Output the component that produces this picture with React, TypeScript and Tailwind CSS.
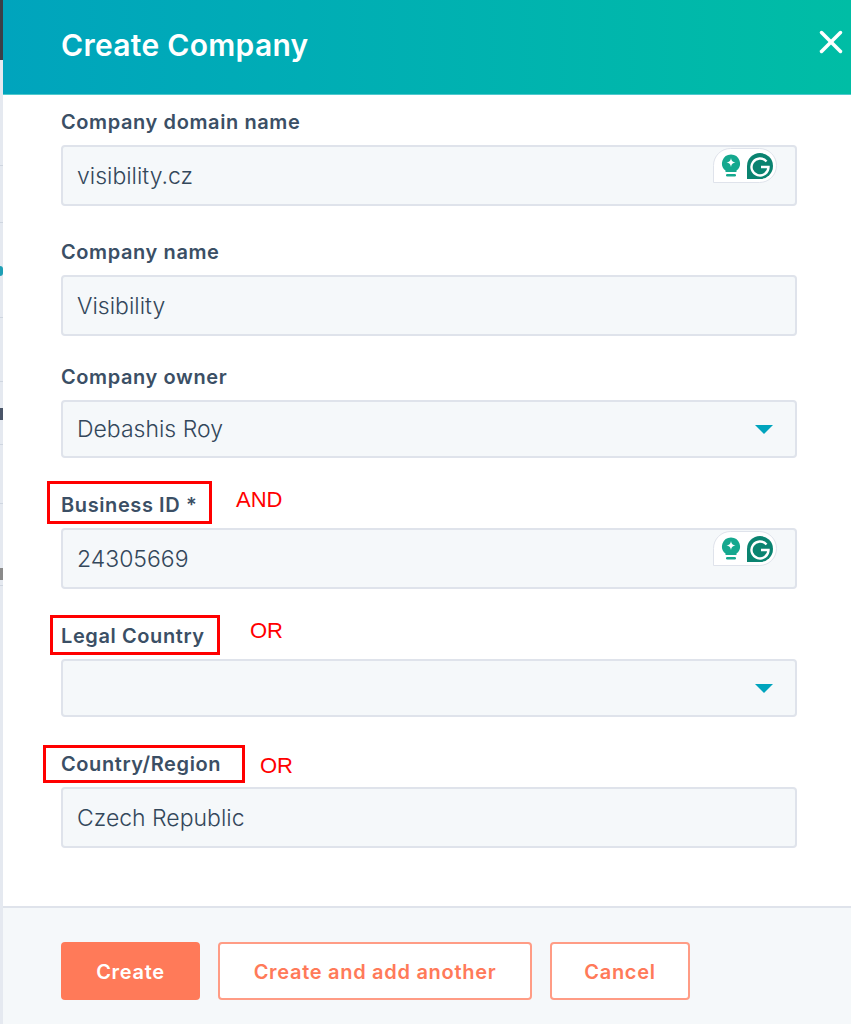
import { X } from "lucide-react";
import { ReactNode } from "react";

// bits of the page behind the dialog that show at the left edge
const stripSegments = [
  "h-[60px] bg-[#3b4048]",
  "h-[105px]",
  "h-px bg-[#cfd6e0]",
  "h-[56px]",
  "h-px bg-[#cfd6e0]",
  "h-[43px]",
  "h-[10px] rounded-r-full bg-[#1f9fb5]",
  "h-[41px]",
  "h-px bg-[#cfd6e0]",
  "h-[63px]",
  "h-px bg-[#cfd6e0]",
  "h-[26px]",
  "h-[12px] bg-[#4a5568]",
  "h-[24px]",
  "h-px bg-[#cfd6e0]",
  "h-[58px]",
  "h-px bg-[#cfd6e0]",
  "h-[64px]",
  "h-[12px] bg-[#8a8a8a]",
  "h-[5px]",
  "h-px bg-[#cfd6e0]",
];

function GrammarlyBadge() {
  return (
    <div className="absolute right-[18px] top-[1px] flex h-[35px] w-[64px] items-center gap-[5px] rounded-tl-[18px] rounded-r-[18px] border border-[#dfe3eb] bg-white pl-[7px]">
      <svg viewBox="0 0 20 24" className="h-[25px] w-[20px]">
        <path d="M10 1a9 9 0 0 0-5.500 16.100V18.500h11v-1.400A9 9 0 0 0 10 1z" fill="#15a88e" />
        <path d="M10 4.500c.6 3 1.500 3.900 4.500 4.500-3 .6-3.900 1.500-4.500 4.500-.6-3-1.500-3.900-4.500-4.500 3-.6 3.900-1.500 4.500-4.500z" fill="#fff" />
        <rect x="5" y="20.500" width="10" height="2.500" rx="1.200" fill="#15a88e" />
      </svg>
      <svg viewBox="0 0 28 28" className="h-[28px] w-[28px]">
        <path d="M14 1a13 13 0 1 1 0 26H1V14A13 13 0 0 1 14 1z" fill="#0a8370" />
        <path d="M20.500 9.500A8.500 8.500 0 1 0 22.500 15H15" fill="none" stroke="#fff" strokeWidth="2.400" />
      </svg>
    </div>
  );
}

function Field({
  label,
  value,
  className,
  select,
  badge,
}: {
  label: string;
  value?: string;
  className: string;
  select?: boolean;
  badge?: boolean;
}) {
  return (
    <div className={className}>
      <div className="h-[23px] text-[20px] font-semibold leading-[25px] tracking-[0.6px] text-[#3b4f65]">
        {label}
      </div>
      <div
        className={`relative mt-[12px] flex items-center rounded-[4px] border-2 border-[#dfe3eb] bg-[#f5f8fa] pl-[14px] pr-[22px] pt-[1px] text-[23px] font-light text-[#33475b] ${
          select ? "h-[58px]" : "h-[61px]"
        }`}
      >
        <span className="flex-1">{value}</span>
        {select && (
          <span className="h-0 w-0 border-x-[9px] border-t-[9px] border-x-transparent border-t-[#00a4bd]" />
        )}
        {badge && <GrammarlyBadge />}
      </div>
    </div>
  );
}

function FooterButton({
  primary,
  width,
  children,
}: {
  primary?: boolean;
  width: string;
  children: ReactNode;
}) {
  return (
    <button
      className={`flex h-[58px] items-center justify-center rounded-[4px] pt-[1px] text-[20px] font-semibold tracking-[0.7px] ${width} ${
        primary
          ? "bg-[#ff7a59] text-white"
          : "border-2 border-[#ff9c85] bg-white text-[#ff7a59]"
      }`}
    >
      {children}
    </button>
  );
}

export default function App() {
  return (
    <div className="relative flex h-[1024px] w-[851px] overflow-hidden bg-white font-['Inter',sans-serif]">
      <div className="flex w-[3px] flex-none flex-col bg-[#e5e9f0]">
        {stripSegments.map((segment, i) => (
          <div key={i} className={segment} />
        ))}
      </div>

      <div className="flex flex-1 flex-col">
        <div className="flex h-[95px] flex-none items-center justify-between border-b border-[#4fc9cd] bg-gradient-to-r from-[#00a4bd] to-[#00bda5] pl-[58px] pr-[1px]">
          <h1 className="mb-[3px] text-[30px] font-semibold tracking-[0.01em] text-white">Create Company</h1>
          <X className="mb-[10px] h-[38px] w-[38px] text-white" strokeWidth={2.200} />
        </div>

        <div className="flex-1 pl-[58px] pr-[54px]">
          <Field className="mt-[15px]" label="Company domain name" value="visibility.cz" badge />
          <Field className="mt-[34px]" label="Company name" value="Visibility" />
          <Field className="mt-[29px]" label="Company owner" value="Debashis Roy" select />
          <Field className="mt-[35px]" label="Business ID *" value="24305669" badge />
          <Field className="mt-[35px]" label="Legal Country" select />
          <Field className="mt-[35px]" label="Country/Region" value="Czech Republic" />
        </div>

        <div className="flex h-[118px] flex-none items-center gap-[18px] border-t-2 border-[#dfe3eb] bg-[#f5f8fa] pl-[58px] pt-[10px]">
          <FooterButton primary width="w-[139px]">Create</FooterButton>
          <FooterButton width="w-[314px]">Create and add another</FooterButton>
          <FooterButton width="w-[140px]">Cancel</FooterButton>
        </div>
      </div>

      {/* red annotations drawn on top of the screenshot */}
      <div className="absolute left-[47px] top-[481px] h-[43px] w-[165px] border-[3px] border-[#ff0000]" />
      <div className="absolute left-[50px] top-[615px] h-[40px] w-[170px] border-[3px] border-[#ff0000]" />
      <div className="absolute left-[43px] top-[745px] h-[38px] w-[202px] border-[3px] border-[#ff0000]" />
      <span className="absolute left-[236px] top-[487px] font-['Liberation_Sans',sans-serif] text-[22px] leading-[26px] text-[#ff0000]">AND</span>
      <span className="absolute left-[250px] top-[618px] font-['Liberation_Sans',sans-serif] text-[22px] leading-[26px] text-[#ff0000]">OR</span>
      <span className="absolute left-[260px] top-[753px] font-['Liberation_Sans',sans-serif] text-[22px] leading-[26px] text-[#ff0000]">OR</span>
    </div>
  );
}
